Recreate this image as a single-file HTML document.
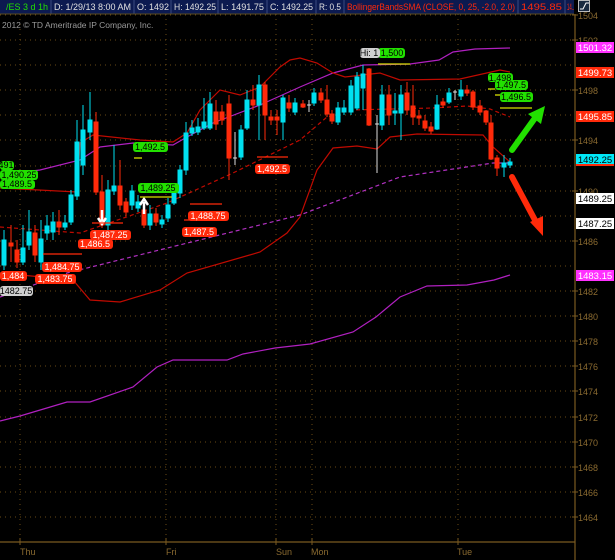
<!DOCTYPE html><html><head><meta charset="utf-8"><style>
body{margin:0;background:#000;width:615px;height:560px;overflow:hidden;font-family:"Liberation Sans",sans-serif}
svg{position:absolute;left:0;top:0}
</style></head><body>
<svg width="615" height="560" viewBox="0 0 615 560" font-family="Liberation Sans, sans-serif">
<rect width="615" height="560" fill="#000"/>
<g stroke="#6a4a14" stroke-width="1" stroke-dasharray="1,4">
<line x1="0" x2="575" y1="15" y2="15"/><line x1="0" x2="575" y1="40" y2="40"/><line x1="0" x2="575" y1="65" y2="65"/><line x1="0" x2="575" y1="90" y2="90"/><line x1="0" x2="575" y1="115" y2="115"/><line x1="0" x2="575" y1="140" y2="140"/><line x1="0" x2="575" y1="166" y2="166"/><line x1="0" x2="575" y1="191" y2="191"/><line x1="0" x2="575" y1="216" y2="216"/><line x1="0" x2="575" y1="241" y2="241"/><line x1="0" x2="575" y1="266" y2="266"/><line x1="0" x2="575" y1="291" y2="291"/><line x1="0" x2="575" y1="316" y2="316"/><line x1="0" x2="575" y1="341" y2="341"/><line x1="0" x2="575" y1="366" y2="366"/><line x1="0" x2="575" y1="391" y2="391"/><line x1="0" x2="575" y1="417" y2="417"/><line x1="0" x2="575" y1="442" y2="442"/><line x1="0" x2="575" y1="467" y2="467"/><line x1="0" x2="575" y1="492" y2="492"/><line x1="0" x2="575" y1="517" y2="517"/>
</g>
<g stroke="#6a4a14" stroke-width="1" stroke-dasharray="1,4">
<line x1="20" x2="20" y1="14" y2="542"/><line x1="166" x2="166" y1="14" y2="542"/><line x1="276" x2="276" y1="14" y2="542"/><line x1="312" x2="312" y1="14" y2="542"/><line x1="458" x2="458" y1="14" y2="542"/>
</g>
<line x1="575" y1="14" x2="575" y2="560" stroke="#7a5a20" stroke-width="1.2"/>
<line x1="0" y1="542" x2="575" y2="542" stroke="#7a5a20" stroke-width="1.2"/>
<g stroke="#7a5a20"><line x1="20" x2="20" y1="538" y2="545"/><line x1="166" x2="166" y1="538" y2="545"/><line x1="276" x2="276" y1="538" y2="545"/><line x1="312" x2="312" y1="538" y2="545"/><line x1="458" x2="458" y1="538" y2="545"/></g>
<g fill="#8a6a30" font-size="9">
<text x="20" y="555">Thu</text><text x="166" y="555">Fri</text><text x="276" y="555">Sun</text><text x="311" y="555">Mon</text><text x="457" y="555">Tue</text>
</g>
<g fill="#8a6a30" font-size="9">
<text x="578" y="19">1504</text><text x="578" y="44">1502</text><text x="578" y="94">1498</text><text x="578" y="144">1494</text><text x="578" y="195">1490</text><text x="578" y="245">1486</text><text x="578" y="295">1482</text><text x="578" y="320">1480</text><text x="578" y="345">1478</text><text x="578" y="370">1476</text><text x="578" y="395">1474</text><text x="578" y="421">1472</text><text x="578" y="446">1470</text><text x="578" y="471">1468</text><text x="578" y="496">1466</text><text x="578" y="521">1464</text>
</g>
<g stroke="#7a5a20"><line x1="572" x2="578" y1="15" y2="15"/><line x1="572" x2="578" y1="40" y2="40"/><line x1="572" x2="578" y1="90" y2="90"/><line x1="572" x2="578" y1="140" y2="140"/><line x1="572" x2="578" y1="191" y2="191"/><line x1="572" x2="578" y1="241" y2="241"/><line x1="572" x2="578" y1="291" y2="291"/><line x1="572" x2="578" y1="316" y2="316"/><line x1="572" x2="578" y1="341" y2="341"/><line x1="572" x2="578" y1="366" y2="366"/><line x1="572" x2="578" y1="391" y2="391"/><line x1="572" x2="578" y1="417" y2="417"/><line x1="572" x2="578" y1="442" y2="442"/><line x1="572" x2="578" y1="467" y2="467"/><line x1="572" x2="578" y1="492" y2="492"/><line x1="572" x2="578" y1="517" y2="517"/></g>
<text x="2" y="28" fill="#9a9a9a" font-size="8.5">2012 © TD Ameritrade IP Company, Inc.</text>
<g fill="none" stroke-width="1.2">
<polyline stroke="#b020c0" points="0,421 20,416 67,402 90,402 133,387 157,367 173,360 227,360 243,354 275,348 310,344 353,332 376,317 400,297 427,286 467,285 494,280 510,275"/>
<polyline stroke="#b020c0" points="0,175 40,170 80,160 100,147 133,143 173,145 187,137 213,123 260,105 300,87 333,73 363,65 410,64 439,60 453,52 475,49 510,48"/>
<polyline stroke="#c00a00" points="0,188 77,192 80,143 93,135 140,140 173,142 187,133 200,110 220,90 240,95 260,87 280,67 290,60 300,58 317,63 333,73 345,77 380,73 400,80 460,79 500,70 510,72"/>
<polyline stroke="#c00a00" points="0,273 73,280 90,300 120,302 160,290 187,273 260,252 287,233 300,217 317,170 333,148 357,146 377,149 390,137 417,134 483,135 493,147 510,162"/>
<polyline stroke="#c00a00" stroke-dasharray="4,3" points="0,227 80,233 167,203 233,173 300,140 327,117 350,110 433,108 467,106 490,109 510,117"/>
<polyline stroke="#b030c0" stroke-dasharray="4,3" points="0,297 67,273 300,215 400,177 493,163 510,163"/>
</g>
<g stroke-width="1">
<g stroke="#00e0f0" fill="#00e0f0">
<line x1="4" x2="4" y1="230" y2="270"/><rect x="2" y="240" width="4" height="25"/>
<line x1="23" x2="23" y1="225" y2="265"/><rect x="21" y="248" width="4" height="14"/>
<line x1="29" x2="29" y1="210" y2="250"/><rect x="27" y="232" width="4" height="13"/>
<line x1="41" x2="41" y1="220" y2="270"/><rect x="39" y="239" width="4" height="23"/>
<line x1="47" x2="47" y1="215" y2="240"/><rect x="45" y="226" width="4" height="7"/>
<line x1="53" x2="53" y1="212" y2="240"/><rect x="51" y="222" width="4" height="10"/>
<line x1="65" x2="65" y1="215" y2="230"/><rect x="63" y="223" width="4" height="4"/>
<line x1="71" x2="71" y1="190" y2="225"/><rect x="69" y="195" width="4" height="27"/>
<line x1="77" x2="77" y1="120" y2="200"/><rect x="75" y="142" width="4" height="54"/>
<line x1="83" x2="83" y1="105" y2="175"/><rect x="81" y="130" width="4" height="35"/>
<line x1="90" x2="90" y1="92" y2="140"/><rect x="88" y="120" width="4" height="12"/>
<line x1="108" x2="108" y1="180" y2="230"/><rect x="106" y="190" width="4" height="35"/>
<line x1="114" x2="114" y1="145" y2="195"/><rect x="112" y="186" width="4" height="5"/>
<line x1="132" x2="132" y1="185" y2="210"/><rect x="130" y="191" width="4" height="14"/>
<line x1="138" x2="138" y1="195" y2="212"/><rect x="136" y="202" width="4" height="6"/>
<line x1="150" x2="150" y1="205" y2="230"/><rect x="148" y="214" width="4" height="11"/>
<line x1="162" x2="162" y1="215" y2="228"/><rect x="160" y="220" width="4" height="4"/>
<line x1="168" x2="168" y1="198" y2="222"/><rect x="166" y="205" width="4" height="13"/>
<line x1="174" x2="174" y1="185" y2="205"/><rect x="172" y="192" width="4" height="11"/>
<line x1="180" x2="180" y1="165" y2="198"/><rect x="178" y="170" width="4" height="23"/>
<line x1="186" x2="186" y1="122" y2="175"/><rect x="184" y="133" width="4" height="37"/>
<line x1="192" x2="192" y1="120" y2="136"/><rect x="190" y="128" width="4" height="5"/>
<line x1="198" x2="198" y1="118" y2="135"/><rect x="196" y="127" width="4" height="5"/>
<line x1="204" x2="204" y1="98" y2="130"/><rect x="202" y="122" width="4" height="6"/>
<line x1="210" x2="210" y1="92" y2="130"/><rect x="208" y="104" width="4" height="24"/>
<line x1="241" x2="241" y1="125" y2="160"/><rect x="239" y="130" width="4" height="27"/>
<line x1="247" x2="247" y1="90" y2="130"/><rect x="245" y="100" width="4" height="28"/>
<line x1="259" x2="259" y1="75" y2="140"/><rect x="257" y="85" width="4" height="20"/>
<line x1="283" x2="283" y1="95" y2="140"/><rect x="281" y="98" width="4" height="24"/>
<line x1="295" x2="295" y1="98" y2="115"/><rect x="293" y="103" width="4" height="9"/>
<line x1="314" x2="314" y1="88" y2="106"/><rect x="312" y="93" width="4" height="10"/>
<line x1="338" x2="338" y1="102" y2="125"/><rect x="336" y="108" width="4" height="14"/>
<line x1="344" x2="344" y1="100" y2="115"/><rect x="342" y="108" width="4" height="4"/>
<line x1="351" x2="351" y1="80" y2="115"/><rect x="349" y="86" width="4" height="26"/>
<line x1="357" x2="357" y1="72" y2="110"/><rect x="355" y="77" width="4" height="31"/>
<line x1="363" x2="363" y1="65" y2="110"/><rect x="361" y="74" width="4" height="14"/>
<line x1="382" x2="382" y1="85" y2="130"/><rect x="380" y="95" width="4" height="30"/>
<line x1="395" x2="395" y1="93" y2="125"/><rect x="393" y="111" width="4" height="2"/>
<line x1="401" x2="401" y1="85" y2="140"/><rect x="399" y="95" width="4" height="18"/>
<line x1="437" x2="437" y1="95" y2="130"/><rect x="435" y="105" width="4" height="24"/>
<line x1="449" x2="449" y1="88" y2="104"/><rect x="447" y="93" width="4" height="9"/>
<line x1="461" x2="461" y1="80" y2="100"/><rect x="459" y="90" width="4" height="6"/>
<line x1="504" x2="504" y1="155" y2="177"/><rect x="502" y="163" width="4" height="4"/>
<line x1="510" x2="510" y1="158" y2="168"/><rect x="508" y="162" width="4" height="3"/>
</g>
<g stroke="#ff2a0a" fill="#ff2a0a">
<line x1="11" x2="11" y1="225" y2="262"/><rect x="9" y="243" width="4" height="3"/>
<line x1="17" x2="17" y1="240" y2="268"/><rect x="15" y="250" width="4" height="12"/>
<line x1="35" x2="35" y1="225" y2="262"/><rect x="33" y="233" width="4" height="22"/>
<line x1="59" x2="59" y1="210" y2="235"/><rect x="57" y="222" width="4" height="5"/>
<line x1="96" x2="96" y1="112" y2="195"/><rect x="94" y="122" width="4" height="70"/>
<line x1="102" x2="102" y1="175" y2="228"/><rect x="100" y="192" width="4" height="33"/>
<line x1="120" x2="120" y1="160" y2="210"/><rect x="118" y="186" width="4" height="19"/>
<line x1="126" x2="126" y1="198" y2="216"/><rect x="124" y="202" width="4" height="10"/>
<line x1="144" x2="144" y1="205" y2="228"/><rect x="142" y="210" width="4" height="15"/>
<line x1="156" x2="156" y1="208" y2="226"/><rect x="154" y="214" width="4" height="8"/>
<line x1="216" x2="216" y1="100" y2="130"/><rect x="214" y="112" width="4" height="12"/>
<line x1="222" x2="222" y1="105" y2="125"/><rect x="220" y="112" width="4" height="8"/>
<line x1="229" x2="229" y1="95" y2="180"/><rect x="227" y="104" width="4" height="54"/>
<line x1="253" x2="253" y1="85" y2="110"/><rect x="251" y="100" width="4" height="5"/>
<line x1="265" x2="265" y1="82" y2="140"/><rect x="263" y="85" width="4" height="30"/>
<line x1="271" x2="271" y1="110" y2="125"/><rect x="269" y="117" width="4" height="3"/>
<line x1="277" x2="277" y1="110" y2="135"/><rect x="275" y="117" width="4" height="3"/>
<line x1="289" x2="289" y1="95" y2="112"/><rect x="287" y="103" width="4" height="5"/>
<line x1="303" x2="303" y1="100" y2="108"/><rect x="301" y="104" width="4" height="3"/>
<line x1="321" x2="321" y1="88" y2="103"/><rect x="319" y="93" width="4" height="7"/>
<line x1="327" x2="327" y1="85" y2="117"/><rect x="325" y="100" width="4" height="14"/>
<line x1="332" x2="332" y1="110" y2="124"/><rect x="330" y="114" width="4" height="7"/>
<line x1="369" x2="369" y1="68" y2="126"/><rect x="367" y="69" width="4" height="56"/>
<line x1="389" x2="389" y1="85" y2="125"/><rect x="387" y="95" width="4" height="20"/>
<line x1="407" x2="407" y1="82" y2="115"/><rect x="405" y="93" width="4" height="17"/>
<line x1="413" x2="413" y1="85" y2="125"/><rect x="411" y="106" width="4" height="11"/>
<line x1="425" x2="425" y1="115" y2="131"/><rect x="423" y="121" width="4" height="7"/>
<line x1="431" x2="431" y1="122" y2="134"/><rect x="429" y="127" width="4" height="4"/>
<line x1="443" x2="443" y1="98" y2="108"/><rect x="441" y="102" width="4" height="3"/>
<line x1="467" x2="467" y1="85" y2="96"/><rect x="465" y="90" width="4" height="3"/>
<line x1="473" x2="473" y1="90" y2="110"/><rect x="471" y="92" width="4" height="15"/>
<line x1="480" x2="480" y1="100" y2="115"/><rect x="478" y="106" width="4" height="6"/>
<line x1="486" x2="486" y1="110" y2="125"/><rect x="484" y="111" width="4" height="11"/>
<line x1="491" x2="491" y1="115" y2="160"/><rect x="489" y="123" width="4" height="36"/>
<line x1="497" x2="497" y1="155" y2="176"/><rect x="495" y="158" width="4" height="10"/>
<line x1="419" x2="419" y1="110" y2="125"/><rect x="417" y="116" width="4" height="2"/>
</g>
<g stroke="#ddd"><line x1="235" x2="235" y1="132" y2="165"/><line x1="233" x2="237" y1="158" y2="158"/>
<line x1="309" x2="309" y1="100" y2="112"/><line x1="307" x2="311" y1="105" y2="105"/>
<line x1="377" x2="377" y1="115" y2="173"/><line x1="375" x2="379" y1="124" y2="124"/>
<line x1="455" x2="455" y1="90" y2="100"/><line x1="453" x2="457" y1="92" y2="92"/></g>
</g>
<path d="M102,210 V221 M98,218 L102,224 L106,218" stroke="#fff" stroke-width="2.5" fill="none"/>
<path d="M144,214 V202 M140,205 L144,199 L148,205" stroke="#fff" stroke-width="2.5" fill="none"/>
<g stroke="#ff2a0a" stroke-width="1.3"><line x1="43" x2="82" y1="254" y2="254"/><line x1="92" x2="123" y1="223" y2="223"/><line x1="190" x2="222" y1="204" y2="204"/><line x1="184" x2="216" y1="220" y2="220"/><line x1="257" x2="288" y1="157" y2="157"/></g>
<g stroke="#d8e000" stroke-width="1.3"><line x1="140" x2="172" y1="197" y2="197"/><line x1="134" x2="142" y1="158" y2="158"/><line x1="378" x2="410" y1="64" y2="64"/><line x1="500" x2="532" y1="108" y2="108"/><line x1="488" x2="495" y1="89" y2="89"/><line x1="495" x2="500" y1="95" y2="95"/></g>
<g font-size="9" text-anchor="middle">
<g fill="#ff2a0a"><rect x="255" y="164" width="35" height="10" rx="3"/><rect x="188" y="211" width="41" height="10" rx="3"/><rect x="182" y="227" width="35" height="10" rx="3"/><rect x="90" y="230" width="41" height="10" rx="3"/><rect x="78" y="239" width="35" height="10" rx="3"/><rect x="42" y="262" width="40" height="10" rx="3"/><rect x="35" y="274" width="41" height="10" rx="3"/><rect x="0" y="271" width="27" height="10" rx="3"/></g>
<g fill="#fff"><text x="272" y="172">1,492.5</text><text x="208" y="219">1,488.75</text><text x="199" y="235">1,487.5</text><text x="110" y="238">1,487.25</text><text x="95" y="247">1,486.5</text><text x="62" y="270">1,484.75</text><text x="55" y="282">1,483.75</text><text x="13" y="279">1,484</text></g>
<g fill="#22e000"><rect x="133" y="142" width="35" height="10" rx="3"/><rect x="0" y="161" width="14" height="9" rx="3"/><rect x="0" y="170" width="38" height="10" rx="3"/><rect x="0" y="180" width="35" height="9" rx="3"/><rect x="138" y="183" width="41" height="10" rx="3"/><rect x="378" y="48" width="27" height="10" rx="3"/><rect x="488" y="73" width="25" height="9" rx="3"/><rect x="495" y="80" width="33" height="10" rx="3"/><rect x="500" y="92" width="33" height="10" rx="3"/></g>
<rect x="0" y="286" width="33" height="10" rx="3" fill="#d0d0d0"/><rect x="360" y="48" width="20" height="10" rx="3" fill="#d0d0d0"/>
<g fill="#000"><text x="150" y="150">1,492.5</text><text x="6" y="168">491</text><text x="19" y="178">1,490.25</text><text x="17" y="187">1,489.5</text><text x="158" y="191">1,489.25</text><text x="392" y="56">1,500</text><text x="500" y="81">1,498</text><text x="511" y="88">1,497.5</text><text x="516" y="100">1,496.5</text><text x="16" y="294">1482.75</text><text x="369" y="56">Hi: 1</text></g>
</g>
<path d="M512,150 L535,118" stroke="#22e000" stroke-width="6" stroke-linecap="round"/>
<polygon points="545,106 528,114 541,124" fill="#22e000"/>
<path d="M512,177 L536,222" stroke="#ff2a0a" stroke-width="6" stroke-linecap="round"/>
<polygon points="543,236 530,222 543,216" fill="#ff2a0a"/>
<g font-size="9.5" text-anchor="middle">
<rect x="576" y="42" width="38" height="11" fill="#ff30ff"/><text x="595" y="51" fill="#fff">1501.32</text>
<rect x="576" y="67" width="38" height="11" fill="#ff2a0a"/><text x="595" y="76" fill="#fff">1499.73</text>
<rect x="576" y="111" width="38" height="11" fill="#ff2a0a"/><text x="595" y="120" fill="#fff">1495.85</text>
<rect x="576" y="154" width="38" height="12" fill="#ff2a0a"/><rect x="576" y="154" width="38" height="10" fill="#00e8f8"/><text x="595" y="163" fill="#000">1492.25</text>
<rect x="576" y="193" width="38" height="11" fill="#fff"/><text x="595" y="202" fill="#000">1489.25</text>
<rect x="576" y="218" width="38" height="11" fill="#fff"/><text x="595" y="227" fill="#000">1487.25</text>
<rect x="576" y="270" width="38" height="11" fill="#ff30ff"/><text x="595" y="279" fill="#fff">1483.15</text>
</g>
<rect x="0" y="0" width="574" height="14" fill="#0c1a50"/>
<g stroke="#3a4a80"><line x1="51" x2="51" y1="0" y2="14"/><line x1="134" x2="134" y1="0" y2="14"/><line x1="171" x2="171" y1="0" y2="14"/><line x1="218" x2="218" y1="0" y2="14"/><line x1="267" x2="267" y1="0" y2="14"/><line x1="316" x2="316" y1="0" y2="14"/><line x1="344" x2="344" y1="0" y2="14"/><line x1="518" x2="518" y1="0" y2="14"/><line x1="565" x2="565" y1="0" y2="14"/></g>
<line x1="0" x2="574" y1="14" y2="14" stroke="#5a4a20"/>
<g font-size="9" fill="#e0e0e0">
<text x="6" y="10" fill="#22e000" textLength="42" lengthAdjust="spacingAndGlyphs">/ES 3 d 1h</text><text x="54" y="10" textLength="77" lengthAdjust="spacingAndGlyphs">D: 1/29/13 8:00 AM</text><text x="137" y="10" textLength="32" lengthAdjust="spacingAndGlyphs">O: 1492</text><text x="174" y="10" textLength="42" lengthAdjust="spacingAndGlyphs">H: 1492.25</text><text x="221" y="10" textLength="43" lengthAdjust="spacingAndGlyphs">L: 1491.75</text><text x="270" y="10" textLength="43" lengthAdjust="spacingAndGlyphs">C: 1492.25</text><text x="319" y="10" textLength="22" lengthAdjust="spacingAndGlyphs">R: 0.5</text>
<text x="347" y="10" fill="#ff2a0a" textLength="168" lengthAdjust="spacingAndGlyphs">BollingerBandsSMA (CLOSE, 0, 25, -2.0, 2.0)</text><text x="521" y="10" fill="#ff2a0a" textLength="41" lengthAdjust="spacingAndGlyphs">1495.85</text><text x="567" y="10" fill="#ff2a0a" textLength="7" lengthAdjust="spacingAndGlyphs">14..</text>
</g>
<rect x="578.5" y="0.5" width="11" height="11" fill="#1a2a40" stroke="#bbb"/>
<path d="M580,9 H583 L586,3 H589" stroke="#fff" fill="none" stroke-width="1"/>
</svg>
</body></html>
